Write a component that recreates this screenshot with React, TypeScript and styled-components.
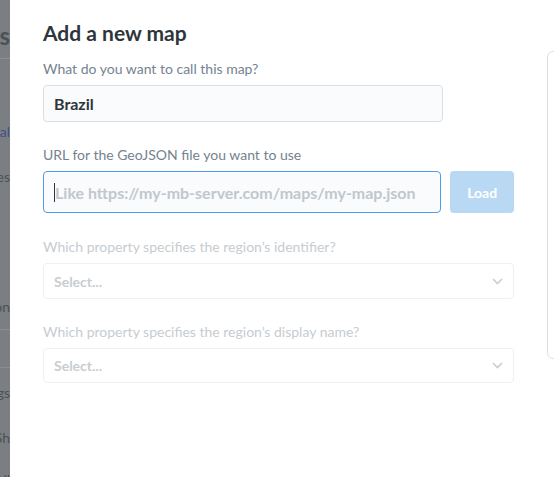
import React from "react";
import styled, { createGlobalStyle } from "styled-components";

const GlobalStyle = createGlobalStyle`
  html, body { margin: 0; padding: 0; }
  body {
    font-family: Lato, "Noto Sans", sans-serif;
    background: #ffffff;
    -webkit-font-smoothing: antialiased;
  }
`;

const Page = styled.div`
  display: flex;
  width: 554px;
  height: 477px;
  overflow: hidden;
`;

const Behind = styled.div`
  width: 10px;
  flex: none;
  overflow: hidden;
  background: #7b7f84;
`;

const BehindInner = styled.div`
  width: 140px;
  margin-left: -130px;
  display: flex;
  flex-direction: column;
  align-items: stretch;
  text-align: right;
  white-space: nowrap;
  color: #4c5157;
`;

const BehindHeading = styled.div`
  height: 59px;
  box-sizing: border-box;
  padding-top: 22px;
  font-size: 24px;
  font-weight: 700;
  line-height: 28px;
  border-bottom: 1px solid #8b8f93;
`;

const BehindItem = styled.div<{ $h: number; $color?: string; $line?: boolean }>`
  height: ${(p) => p.$h}px;
  flex: none;
  box-sizing: border-box;
  display: flex;
  align-items: center;
  justify-content: flex-end;
  font-size: 14px;
  color: ${(p) => p.$color || "#4c5157"};
  border-bottom: ${(p) => (p.$line ? "1px solid #8b8f93" : "none")};
`;

const Modal = styled.div`
  flex: 1;
  display: flex;
  background: #ffffff;
  padding-left: 33px;
  min-width: 0;
`;

const Form = styled.div`
  width: 471px;
  flex: none;
  display: flex;
  flex-direction: column;
  padding-top: 20px;
`;

const Title = styled.h2`
  margin: 0;
  font-size: 21px;
  line-height: 25px;
  font-weight: 700;
  color: #2e353b;
`;

const Label = styled.div<{ $disabled?: boolean; $mt: number }>`
  margin-top: ${(p) => p.$mt}px;
  font-size: 14px;
  line-height: 17px;
  color: ${(p) => (p.$disabled ? "#c7ccd1" : "#74838f")};
`;

const Row = styled.div`
  display: flex;
  gap: 9px;
  margin-top: 8px;
`;

const TextInput = styled.div<{ $focused?: boolean; $h: number; $w: number }>`
  width: ${(p) => p.$w}px;
  height: ${(p) => p.$h}px;
  box-sizing: border-box;
  display: flex;
  align-items: center;
  padding-left: 10px;
  background: #f9fbfc;
  border: 1px solid ${(p) => (p.$focused ? "#509ee3" : "#dcdfe2")};
  border-radius: 4px;
  font-size: 16px;
  font-weight: 700;
  color: #2e353b;
`;

const Caret = styled.span`
  display: inline-block;
  width: 1px;
  height: 19px;
  background: #2e353b;
`;

const Placeholder = styled.span`
  color: #c1c7cd;
  font-size: 16px;
  font-weight: 700;
  white-space: nowrap;
`;

const LoadButton = styled.div`
  width: 64px;
  height: 42px;
  box-sizing: border-box;
  display: flex;
  align-items: center;
  justify-content: center;
  background: #b9d8f3;
  border-radius: 4px;
  color: #ffffff;
  font-size: 14px;
  font-weight: 700;
`;

const SelectBox = styled.div<{ $h: number }>`
  margin-top: 8px;
  height: ${(p) => p.$h}px;
  box-sizing: border-box;
  display: flex;
  align-items: center;
  justify-content: space-between;
  padding: 0 10px 0 10px;
  border: 1px solid #eef0f2;
  border-radius: 4px;
  font-size: 14px;
  font-weight: 700;
  color: #c8cdd2;
`;

const Preview = styled.div`
  margin-left: 33px;
  margin-top: 51px;
  width: 200px;
  height: 308px;
  flex: none;
  box-sizing: border-box;
  border: 1px solid #dcdfe2;
  border-radius: 6px;
`;

const Chevron = () => (
  <svg width="11" height="7" viewBox="0 0 11 7" fill="none">
    <path d="M1 1l4.5 4.5L10 1" stroke="#c8cdd2" strokeWidth="1.6" />
  </svg>
);

export default function App() {
  return (
    <>
      <GlobalStyle />
      <Page>
        <Behind>
          <BehindInner>
            <BehindHeading>Settings</BehindHeading>
            <BehindItem $h={51}>&nbsp;</BehindItem>
            <BehindItem $h={42} $color="#3f4f86">General</BehindItem>
            <BehindItem $h={48}>Updates</BehindItem>
            <BehindItem $h={83}>&nbsp;</BehindItem>
            <BehindItem $h={47} $line>Authentication</BehindItem>
            <BehindItem $h={38} $line>&nbsp;</BehindItem>
            <BehindItem $h={48}>Settings</BehindItem>
            <BehindItem $h={42}>Sh</BehindItem>
            <BehindItem $h={42}>All</BehindItem>
          </BehindInner>
        </Behind>
        <Modal>
          <Form>
            <Title>Add a new map</Title>
            <Label $mt={15}>What do you want to call this map?</Label>
            <Row>
              <TextInput $w={400} $h={37}>Brazil</TextInput>
            </Row>
            <Label $mt={24}>URL for the GeoJSON file you want to use</Label>
            <Row>
              <TextInput $w={400} $h={42} $focused>
                <Caret />
                <Placeholder>Like https://my-mb-server.com/maps/my-map.json</Placeholder>
              </TextInput>
              <LoadButton>Load</LoadButton>
            </Row>
            <Label $mt={25} $disabled>
              Which property specifies the region’s identifier?
            </Label>
            <SelectBox $h={36}>
              Select...
              <Chevron />
            </SelectBox>
            <Label $mt={24} $disabled>
              Which property specifies the region’s display name?
            </Label>
            <SelectBox $h={35}>
              Select...
              <Chevron />
            </SelectBox>
          </Form>
          <Preview />
        </Modal>
      </Page>
    </>
  );
}
